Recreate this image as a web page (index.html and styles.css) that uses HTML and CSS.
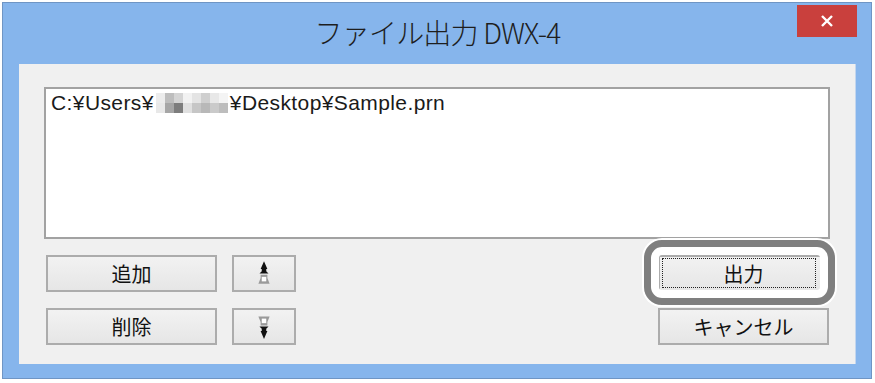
FILE: index.html
```html
<!DOCTYPE html>
<html lang="ja">
<head>
    <meta charset="UTF-8">
    <meta name="viewport" content="width=device-width, initial-scale=1.0">
    <link rel="stylesheet" href="styles.css">
</head>
<body>
<div class="window">
    <div class="titlebar">
        <div class="title">ファイル出力 DWX-4</div>
        <div class="close-btn">
            <svg width="14" height="12" viewBox="0 0 14 12">
                <path d="M2 1 L12 11 M12 1 L2 11" stroke="#fff" stroke-width="2.4" fill="none"/>
            </svg>
        </div>
    </div>
    <div class="client">
        <div class="listbox">
            <div class="list-item">C:¥Users¥<span class="mosaic"><i class="m1"></i><i class="m2"></i><i class="m3"></i><i class="m4"></i><i class="m5"></i><i class="m6"></i><i class="m7"></i><i class="m8"></i><i class="m9"></i><i class="m10"></i><i class="m11"></i><i class="m12"></i><i class="m13"></i><i class="m14"></i><i class="m15"></i><i class="m16"></i></span>¥Desktop¥Sample.prn</div>
        </div>
        <div class="controls">
            <div class="left-group">
                <button class="btn btn-wide">追加</button>
                <button class="btn btn-small">
                    <svg width="16" height="27" viewBox="0 0 14 24">
                        <path d="M7 1 L10 8 L9 8 L9 10 L11 12 L3 12 L5 10 L5 8 L4 8 Z" fill="#111"/>
                        <path d="M4 13 L10 13 L10 16 L12 21 L2 21 L4 16 Z" fill="#9a9a9a"/>
                        <rect x="5" y="15" width="4" height="4" fill="#fff"/>
                    </svg>
                </button>
                <button class="btn btn-wide">削除</button>
                <button class="btn btn-small">
                    <svg width="16" height="27" viewBox="0 0 14 24">
                        <path d="M2 3 L12 3 L10 8 L10 11 L4 11 L4 8 Z" fill="#9a9a9a"/>
                        <rect x="5" y="5" width="4" height="4" fill="#fff"/>
                        <path d="M3 12 L11 12 L9 14 L9 16 L10 16 L7 23 L4 16 L5 16 L5 14 Z" fill="#111"/>
                    </svg>
                </button>
            </div>
            <div class="right-group">
                <div class="focus-wrap">
                    <button class="btn btn-wide btn-default">出力</button>
                    <div class="highlight-ring"></div>
                </div>
                <button class="btn btn-wide">キャンセル</button>
            </div>
        </div>
    </div>
</div>
</body>
</html>
```

FILE: styles.css
```css
body {
    margin: 0;
    background-color: #ffffff;
    font-family: "Noto Sans CJK JP", sans-serif;
}

.window {
    margin: 2px 0 0 2px;
    border: 1px solid #6f95c4;
    background-color: #86b5ec;
    display: flex;
    flex-direction: column;
    padding: 0 15px 14px 16px;
    width: 837px;
    height: 361px;
}

.titlebar {
    height: 61px;
    display: flex;
    align-items: center;
    justify-content: center;
    position: relative;
}

.title {
    font-size: 28px;
    font-weight: 300;
    color: #1e1e1e;
    letter-spacing: -0.8px;
    margin-top: -4px;
}

.close-btn {
    position: absolute;
    top: 2px;
    right: -1px;
    width: 60px;
    height: 32px;
    background-color: #c9403d;
    display: flex;
    align-items: center;
    justify-content: center;
}

.client {
    flex: 1;
    background-color: #f0f0f0;
    padding: 23px 25px 0 25px;
    border-right: 1px solid #c3d6ee;
}

.listbox {
    height: 144px;
    border: 2px solid #a2a2a2;
    background-color: #ffffff;
    padding: 2px 5px;
}

.list-item {
    font-family: "Liberation Sans", "Noto Sans CJK JP", sans-serif;
    font-size: 21px;
    color: #1a1a1a;
    letter-spacing: 0.4px;
    display: flex;
    align-items: center;
}

.mosaic {
    display: inline-grid;
    grid-template-columns: repeat(8, 9px);
    grid-template-rows: repeat(2, 10px);
    margin: 0 2px;
}

.mosaic i { display: block; }
.m1 { background: #ececec; }
.m2 { background: #bdbdbd; }
.m3 { background: #d4d4d4; }
.m4 { background: #f2f2f2; }
.m5 { background: #e4e4e4; }
.m6 { background: #cfcfcf; }
.m7 { background: #e8e8e8; }
.m8 { background: #f4f4f4; }
.m9 { background: #e8e8e8; }
.m10 { background: #a6a6a6; }
.m11 { background: #7d7d7d; }
.m12 { background: #e0e0e0; }
.m13 { background: #c6c6c6; }
.m14 { background: #b8b8b8; }
.m15 { background: #cacaca; }
.m16 { background: #bdbdbd; }

.controls {
    display: flex;
    justify-content: space-between;
    margin-top: 16px;
}

.left-group {
    display: grid;
    grid-template-columns: 171px 64px;
    column-gap: 15px;
    row-gap: 16px;
    margin-left: 2px;
}

.right-group {
    display: flex;
    flex-direction: column;
    gap: 16px;
    margin-right: 1px;
}

.btn {
    height: 37px;
    border: 2px solid #acacac;
    background: linear-gradient(#f2f2f2, #e6e6e6);
    font-family: "Noto Sans CJK JP", sans-serif;
    font-size: 20px;
    color: #111;
    padding: 0;
    display: flex;
    align-items: center;
    justify-content: center;
}

.btn-wide { width: 171px; }
.btn-small { width: 64px; }

.focus-wrap {
    position: relative;
}

.btn-default {
    position: relative;
}

.btn-default::after {
    content: "";
    position: absolute;
    top: 1px;
    left: 2px;
    right: 11px;
    bottom: 2px;
    border: 1px dotted #222;
}

.highlight-ring {
    position: absolute;
    left: -14px;
    top: -15px;
    width: 177px;
    height: 51px;
    border: 7px solid #7f7f7f;
    border-radius: 18px;
    box-shadow: inset 0 0 0 8px #ffffff, 0 0 0 2px #ffffff;
}
```
